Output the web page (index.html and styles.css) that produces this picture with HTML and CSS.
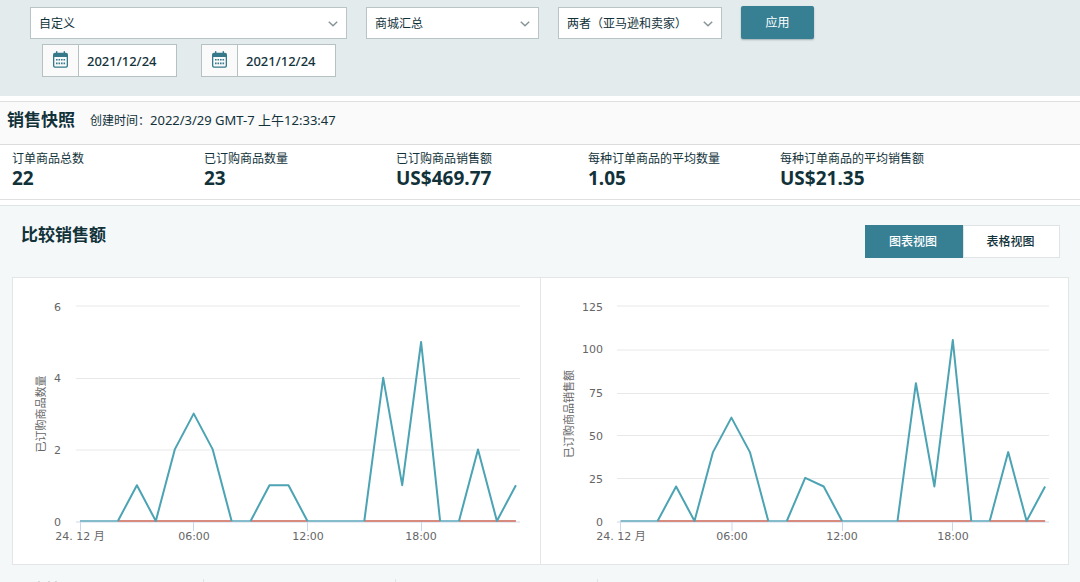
FILE: index.html
```html
<!DOCTYPE html>
<html lang="zh-CN">
<head>
<meta charset="utf-8">
<meta name="viewport" content="width=device-width, initial-scale=1">
<title>销售快照</title>
<link rel="stylesheet" href="styles.css">
</head>
<body>
<svg class="sprite" aria-hidden="true">
  <symbol id="chevron" viewBox="0 0 10 6"><path d="M0.8 0.8 5 4.8 9.2 0.8" fill="none" stroke="#879596" stroke-width="1.5"/></symbol>
  <symbol id="calendar" viewBox="0 0 15 17">
    <path fill="#35798b" fill-rule="evenodd" d="M2 1.8h1V.6q0-.6.7-.6t.7.6v1.2h6.2V.6q0-.6.7-.6t.7.6v1.2h1q2 0 2 2v11q0 2-2 2H2q-2 0-2-2v-11q0-2 2-2zM1.3 6v8.6q0 .9.9.9h10.6q.9 0 .9-.9V6z"/>
    <path fill="#35798b" d="M3 8h1.6v1.6H3zM5.5 8h1.6v1.6H5.500zM8 8h1.6v1.6H8zM10.500 8h1.6v1.6h-1.6zM3 11.600h1.6v1.600H3zM5.500 11.600h1.600v1.600H5.500zM8 11.600h1.600v1.600H8zM10.500 11.600h1.600v1.600h-1.600z"/>
  </symbol>
</svg>

<form class="filters">
  <div class="filter-row">
    <div class="select select-date">
      <select aria-label="日期"><option>自定义</option></select>
      <svg class="chevron"><use href="#chevron"/></svg>
    </div>
    <div class="select select-market">
      <select aria-label="商城"><option>商城汇总</option></select>
      <svg class="chevron"><use href="#chevron"/></svg>
    </div>
    <div class="select select-channel">
      <select aria-label="配送渠道"><option>两者（亚马逊和卖家）</option></select>
      <svg class="chevron"><use href="#chevron"/></svg>
    </div>
    <button class="apply" type="button">应用</button>
  </div>
  <div class="date-row">
    <label class="date"><span class="date-icon"><svg class="calendar"><use href="#calendar"/></svg></span><input type="text" aria-label="开始日期" value="2021/12/24"></label>
    <label class="date"><span class="date-icon"><svg class="calendar"><use href="#calendar"/></svg></span><input type="text" aria-label="结束日期" value="2021/12/24"></label>
  </div>
</form>

<section class="snapshot">
  <header class="snapshot-head">
    <h2>销售快照</h2>
    <p>创建时间：<time>2022/3/29 GMT-7 上午12:33:47</time></p>
  </header>
  <dl class="metrics">
    <div><dt>订单商品总数</dt><dd>22</dd></div>
    <div><dt>已订购商品数量</dt><dd>23</dd></div>
    <div><dt>已订购商品销售额</dt><dd>US$469.77</dd></div>
    <div><dt>每种订单商品的平均数量</dt><dd>1.05</dd></div>
    <div><dt>每种订单商品的平均销售额</dt><dd>US$21.35</dd></div>
  </dl>
</section>

<section class="compare">
  <header class="compare-head">
    <h2>比较销售额</h2>
    <div class="views">
      <button class="view view-active" type="button" aria-pressed="true">图表视图</button>
      <button class="view" type="button" aria-pressed="false">表格视图</button>
    </div>
  </header>
  <div class="charts">
    <svg class="chart" viewBox="0 0 527 286" role="img" aria-label="已订购商品数量">
      <path class="grid" d="M63 28h444M63 100.500h444M63 172h444"/>
      <path class="axis" d="M63 244h444M67.500 244v9M180.500 244v9M294.500 244v9M408.500 244v9"/>
      <path class="previous" d="M67 243H502.900"/>
      <path class="zero" d="M67 243H104.900M218.600 243H237.600M294.400 243H351.300M427.100 243H446"/>
      <path class="current" d="M104.900 243 123.900 207.200 142.800 243 161.800 171.400 180.700 135.600 199.700 171.400 218.600 243M237.600 243 256.500 207.200 275.500 207.200 294.400 243M351.300 243 370.200 99.800 389.200 207.200 408.100 64 427.100 243M446 243 465 171.400 483.900 243 502.900 207.200"/>
      <g class="y-labels"><text x="48" y="33">6</text><text x="48" y="104">4</text><text x="48" y="176">2</text><text x="48" y="248">0</text></g>
      <g class="x-labels"><text x="67" y="262">24. 12 月</text><text x="181" y="262">06:00</text><text x="295" y="262">12:00</text><text x="408" y="262">18:00</text></g>
      <text class="axis-title" transform="translate(32 136) rotate(-90)">已订购商品数量</text>
    </svg>
    <svg class="chart" viewBox="0 0 527 286" role="img" aria-label="已订购商品销售额">
      <path class="grid" d="M76 28h432M76 72h432M76 115.500h432M76 157.500h432M76 200.500h432"/>
      <path class="axis" d="M76 244h432M79.500 244v9M191 244v9M301.500 244v9M411.500 244v9"/>
      <path class="previous" d="M79.700 243H504.100"/>
      <path class="zero" d="M79.700 243H116.600M227.300 243H245.800M301.100 243H356.500M430.300 243H448.700"/>
      <path class="current" d="M116.600 243 135.100 208.500 153.500 243 172 174.100 190.400 139.600 208.900 174.100 227.300 243M245.800 243 264.200 199.900 282.700 208.500 301.100 243M356.500 243 374.900 105.200 393.400 208.500 411.800 62.100 430.300 243M448.700 243 467.200 174.100 485.600 243 504.100 208.500"/>
      <g class="y-labels"><text x="62" y="33">125</text><text x="62" y="75">100</text><text x="62" y="119">75</text><text x="62" y="162">50</text><text x="62" y="205">25</text><text x="62" y="248">0</text></g>
      <g class="x-labels"><text x="80" y="262">24. 12 月</text><text x="191" y="262">06:00</text><text x="301" y="262">12:00</text><text x="412" y="262">18:00</text></g>
      <text class="axis-title" transform="translate(32 136) rotate(-90)">已订购商品销售额</text>
    </svg>
  </div>
  <div class="legend-row" aria-hidden="true">
    <span><svg class="legend-mark" viewBox="0 0 20 1"><path d="M0 0h2v1H0zM10 0h2v1h-2zM17 0h2v1h-2z" fill="#d5dadb"/></svg></span><span></span><span></span><span></span>
  </div>
</section>
</body>
</html>
```

FILE: styles.css
```css
* {
  box-sizing: border-box;
}

body {
  margin: 0;
  background: #fff;
  color: #12323a;
  font-family: "Noto Sans", "Noto Sans CJK SC", sans-serif;
  font-size: 12px;
  line-height: 16px;
}

h2, p, dl, dd {
  margin: 0;
}

h2 {
  font-size: 17px;
  font-weight: 700;
  line-height: 20px;
}

button, input, select {
  font: inherit;
  color: inherit;
}

.sprite {
  display: none;
}

.filters {
  padding: 6px 30px 19px;
  background: #e4ebed;
}

.filter-row {
  display: flex;
  gap: 19px;
}

.select {
  position: relative;
  margin-top: 1px;
}

.select select {
  display: block;
  width: 100%;
  height: 32px;
  padding: 2px 24px 0 8px;
  border: 1px solid #b8c4c5;
  border-radius: 0;
  background: #fff;
  appearance: none;
}

.select-date {
  width: 317px;
}

.select-market {
  width: 173px;
}

.select-channel {
  width: 164px;
}

.chevron {
  position: absolute;
  right: 9px;
  top: 14px;
  width: 10px;
  height: 6px;
  pointer-events: none;
}

.apply {
  width: 73px;
  height: 33px;
  padding: 0;
  border: 0;
  border-radius: 2px;
  background: #378094;
  box-shadow: 0 1px 2px #9fb0b5;
  color: #fff;
}

.date-row {
  display: flex;
  gap: 24px;
  margin-top: 5px;
  padding-left: 12px;
}

.date {
  display: flex;
  width: 135px;
  height: 33px;
  border: 1px solid #b5c1c2;
  background: #fff;
}

.date-icon {
  display: flex;
  flex: none;
  align-items: center;
  justify-content: center;
  width: 36px;
  padding-bottom: 2px;
  border-right: 1px solid #b5c1c2;
  background: #fafafa;
}

.calendar {
  width: 15px;
  height: 17px;
}

.date input {
  width: 100%;
  min-width: 0;
  padding: 0 8px;
  border: 0;
  background: #fff;
  font-size: 13px;
  font-weight: 500;
}

.snapshot {
  margin: 5px 0;
  border-top: 1px solid #dedfdf;
  border-bottom: 1px solid #dfe1e1;
}

.snapshot-head {
  display: flex;
  align-items: center;
  gap: 15px;
  padding: 8px 7px 14px;
  border-bottom: 1px solid #dcdcdc;
  background: #fafafa;
}

.snapshot-head time {
  font-size: 13px;
}

.metrics {
  display: grid;
  grid-template-columns: repeat(5, 192px);
  padding: 6px 12px 10px;
}

.metrics dd {
  font-size: 19px;
  font-weight: 700;
  line-height: 22px;
}

.compare {
  border-top: 1px solid #dfe4e4;
  background: #f4f8f9;
}

.compare-head {
  display: flex;
  align-items: flex-start;
  justify-content: space-between;
  padding: 19px 20px 19px 21px;
}

.views {
  display: flex;
}

.view {
  width: 97px;
  height: 33px;
  padding: 0 2px 0 0;
  border: 1px solid #dfe5e5;
  background: #fff;
  font-weight: 500;
}

.view-active {
  width: 98px;
  border-color: #378094;
  background: #378094;
  color: #fff;
}

.charts {
  display: grid;
  grid-template-columns: 527fr 528fr;
  margin: 0 11px 0 12px;
  border: 1px solid #e3e6e6;
  background: #fff;
}

.chart {
  display: block;
  width: 100%;
}

.chart + .chart {
  border-left: 1px solid #e3e6e6;
}

.chart path {
  fill: none;
}

.chart .grid {
  stroke: #e8e8e8;
}

.chart .axis {
  stroke: #ccd6eb;
}

.chart .previous {
  stroke: #d98a7e;
  stroke-width: 2;
}

.chart .zero {
  stroke: #84bccb;
  stroke-width: 2;
}

.chart .current {
  stroke: #4ba3b3;
  stroke-width: 2;
  stroke-linejoin: round;
}

.chart text {
  fill: #666;
  font-family: "DejaVu Sans", "Noto Sans CJK SC", sans-serif;
  font-size: 11px;
}

.y-labels {
  text-anchor: end;
}

.x-labels,
.axis-title {
  text-anchor: middle;
}

.legend-row {
  display: grid;
  grid-template-columns: 191px 192px 202px 1fr;
  height: 3px;
  margin: 14px 11px 0 13px;
}

.legend-row span {
  display: flex;
  align-items: flex-end;
  padding-left: 25px;
  border-right: 1px solid #dfe5e5;
}

.legend-row span:last-child {
  border: 0;
}

.legend-mark {
  width: 20px;
  height: 1px;
}
```
